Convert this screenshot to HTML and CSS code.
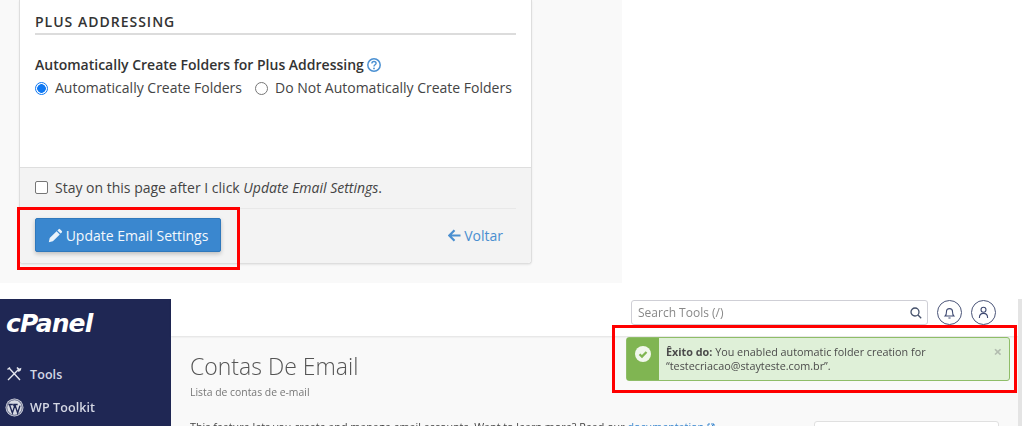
FILE: index.html
```html
<!DOCTYPE html>
<html lang="en">
<head>
<meta charset="utf-8">
<title>Email Settings</title>
<link rel="stylesheet" href="styles.css">
</head>
<body>
<section class="shot-top">
  <div class="card">
    <div class="card-body">
      <h2 class="section-title">PLUS ADDRESSING</h2>
      <div class="field-label">Automatically Create Folders for Plus Addressing
        <svg class="help" width="14" height="14" viewBox="0 0 14 14"><circle cx="7" cy="7" r="6.200" fill="none" stroke="#4a90d2" stroke-width="1.500"/><path d="M4.900 5.500C4.900 4.200 5.900 3.500 7 3.500s2.100 .7 2.100 1.800c0 1.500-2.100 1.400-2.100 3.100" fill="none" stroke="#4a90d2" stroke-width="1.400"/><circle cx="7" cy="10.400" r=".9" fill="#4a90d2"/></svg>
      </div>
      <div class="radios">
        <label class="opt"><span class="radio on"></span>Automatically Create Folders</label>
        <label class="opt"><span class="radio"></span>Do Not Automatically Create Folders</label>
      </div>
    </div>
    <div class="card-foot">
      <div class="stay"><span class="check"></span><span>Stay on this page after I click <em>Update Email Settings</em>.</span></div>
      <div class="actions">
        <button class="btn">
          <svg width="15" height="15" viewBox="0 0 15 15"><path d="M10.600 1.200a1 1 0 0 1 1.400 0l1.800 1.800a1 1 0 0 1 0 1.400l-1.200 1.200-3.200-3.200zM8.600 3.200l3.200 3.200-6.900 6.900L.8 14.200l.9-4.100z" fill="#eaf3fb"/></svg>
          Update Email Settings
        </button>
        <a class="back" href="#">
          <svg width="13" height="13" viewBox="0 0 13 13"><path d="M6.500 1.300 1.300 6.500l5.200 5.200M1.600 6.500H12.500" fill="none" stroke="#4a8fd0" stroke-width="2.200"/></svg>
          Voltar
        </a>
      </div>
    </div>
  </div>
  <div class="mark mark-btn"></div>
</section>

<section class="shot-bottom">
  <aside class="sidebar">
    <div class="logo">cPanel</div>
    <div class="nav-item">
      <svg width="16" height="16" viewBox="0 0 16 16"><path d="M2 14 13 3M3 2l11 12M1.500 3.500 4 1.500M11 1.500c1 1.500 2.500 2 3.500 1.500-.2 1.500-1.200 2-2.500 2" fill="none" stroke="#e4e6ee" stroke-width="1.400"/></svg>
      Tools
    </div>
    <div class="nav-item nav-wp">
      <svg width="19" height="19" viewBox="0 0 18 18"><circle cx="9" cy="9" r="8.500" fill="#d9dbe4"/><circle cx="9" cy="9" r="7.300" fill="none" stroke="#1f2754" stroke-width=".6"/><path d="M3.200 6.200h4.200M4.200 6.200l2.800 8 2-6-1-2M7.800 6.200h4.200M9.300 6.200l2.700 8 2.200-7" fill="none" stroke="#1f2754" stroke-width="1.300"/></svg>
      WP Toolkit
    </div>
  </aside>
  <div class="main">
    <header class="topbar">
      <div class="search"><span>Search Tools (/)</span>
        <svg width="12" height="12" viewBox="0 0 12 12"><circle cx="5" cy="5" r="4" fill="none" stroke="#44506a" stroke-width="1.300"/><path d="m8 8 3.200 3.200" stroke="#44506a" stroke-width="1.300"/></svg>
      </div>
      <span class="round">
        <svg width="13" height="13" viewBox="0 0 12 12"><path d="M2 9.200c1-1 1.200-2 1.200-4a2.800 2.800 0 0 1 5.600 0c0 2 .2 3 1.200 4zM5 11h2" fill="none" stroke="#3f4a72" stroke-width="1"/></svg>
      </span>
      <span class="round">
        <svg width="13" height="13" viewBox="0 0 12 12"><circle cx="6" cy="3.500" r="2.300" fill="none" stroke="#3f4a72" stroke-width="1"/><path d="M2.200 11c0-3 1.500-4.200 3.800-4.200S9.800 8 9.800 11" fill="none" stroke="#3f4a72" stroke-width="1"/></svg>
      </span>
    </header>
    <div class="content">
      <h1 class="page-title">Contas De Email</h1>
      <p class="page-sub">Lista de contas de e-mail</p>
      <div class="intro">
        <p>This feature lets you create and manage email accounts. Want to learn more? Read our <a href="#">documentation</a> <svg width="8" height="8" viewBox="0 0 8 8"><path d="M3 1H1v6h6V5M4 1h3v3M7 1 3.500 4.500" fill="none" stroke="#3a87cf"/></svg>.</p>
        <div class="side-box"></div>
      </div>
    </div>
  </div>
  <div class="alert">
    <div class="alert-icon">
      <svg width="16" height="16" viewBox="0 0 16 16"><circle cx="8" cy="8" r="8" fill="#f1f7ec"/><path d="M4.500 8.200 7 10.600l4.500-4.600" fill="none" stroke="#80b552" stroke-width="2.200"/></svg>
    </div>
    <div class="alert-text"><b>Êxito do:</b> You enabled automatic folder creation for “testecriacao@stayteste.com.br”.</div>
    <span class="alert-x">×</span>
  </div>
  <div class="scroll"></div>
  <div class="mark mark-alert"></div>
</section>
</body>
</html>
```
FILE: styles.css
```css
* { box-sizing: border-box; }
html, body { margin: 0; padding: 0; background: #fff; }
body { width: 1026px; height: 430px; overflow: hidden; position: relative; font-family: "Open Sans", sans-serif; font-size: 14px; color: #333; }

.shot-top { position: relative; width: 622px; height: 283px; background: #f9f9f9; padding-left: 19px; }
.card { width: 513px; height: 264px; background: #fff; border: 1px solid #dedede; border-top: 0; border-radius: 0 0 4px 4px; box-shadow: 0 1px 2px rgba(0,0,0,.08); display: flex; flex-direction: column; }
.card-body { height: 167px; padding: 12px 15px 0; flex: none; }
.section-title { margin: 0; height: 23px; border-bottom: 2px solid #dcdcdc; font-size: 14px; line-height: 20px; font-weight: 600; letter-spacing: 1px; color: #333; }
.field-label { margin-top: 20px; height: 20px; line-height: 20px; font-weight: 600; display: flex; align-items: center; gap: 3px; }
.radios { margin-top: 3px; display: flex; gap: 13px; }
.opt { display: flex; align-items: center; height: 20px; line-height: 20px; color: #444; }
.radio { width: 13px; height: 13px; border-radius: 50%; border: 1px solid #777; margin-right: 7px; background: #fff; }
.radio.on { border: 1.500px solid #0f78f2; background: radial-gradient(circle, #0f78f2 0 4px, #fff 4.600px); }

.card-foot { flex: 1; background: #f3f3f3; border-top: 1px solid #dedede; padding: 0 15px; border-radius: 0 0 4px 4px; }
.stay { height: 41px; border-bottom: 1px solid #e8e8e8; display: flex; align-items: center; color: #444; padding-bottom: 1px; }
.check { width: 13px; height: 13px; border: 1px solid #767676; border-radius: 2px; background: #fff; margin-right: 7px; }
.actions { display: flex; justify-content: space-between; align-items: center; padding-top: 9px; }
.btn { width: 186px; height: 34px; background: #3a87cf; color: #f4f8fc; border: 1px solid #2f78bc; border-radius: 2px; box-shadow: 0 2px 4px rgba(0,0,0,.22); font: 14px "Open Sans", sans-serif; display: flex; align-items: center; justify-content: center; gap: 3px; padding: 0; }
.back { color: #4a8fd0; text-decoration: none; display: flex; align-items: center; gap: 3px; margin-right: 13px; }

.mark { position: absolute; border: 3px solid #f00; pointer-events: none; }
.mark-btn { left: 17px; top: 207px; width: 223px; height: 63px; }
.mark-alert { left: 612px; top: 26px; width: 405px; height: 68px; }

.shot-bottom { position: absolute; left: 0; top: 299px; width: 1026px; height: 127px; display: flex; overflow: hidden; filter: blur(.4px); }
.sidebar { width: 171px; flex: none; background: #1f2754; color: #d4d7e4; }
.logo { margin: 11px 0 0 6px; height: 28px; color: #fff; font: italic 700 25px/28px "DejaVu Sans", sans-serif; letter-spacing: -.9px; }
.nav-item { display: flex; align-items: center; gap: 8px; height: 20px; margin: 0 0 13px 6px; font-size: 12.500px; font-weight: 600; letter-spacing: .1px; }
.logo + .nav-item { margin-top: 26px; }
.nav-wp { gap: 6px; margin-left: 5px; }
.main { width: 847px; flex: none; }
.topbar { height: 37px; background: #fff; display: flex; justify-content: flex-start; padding: 1px 0 0 460px; box-shadow: 0 1px 2px rgba(0,0,0,.1); position: relative; }
.search { width: 297px; height: 25px; border: 1px solid #cfcfd6; border-radius: 3px; display: flex; align-items: center; justify-content: space-between; padding: 0 5px 0 6px; font-size: 12px; color: #888; margin-right: 9px; }
.round { width: 25px; height: 25px; border: 1px solid #4a5478; border-radius: 50%; display: flex; align-items: center; justify-content: center; margin-right: 9px; }
.content { height: 90px; background: #f9f9f9; padding: 14px 0 0 19px; overflow: hidden; }
.page-title { margin: 0; font-size: 23px; font-weight: 300; line-height: 32px; color: #555; }
.page-sub { margin: 3px 0 0; font-size: 10.400px; line-height: 14px; color: #777; }
.intro { position: relative; margin-top: 21px; font-size: 10.750px; line-height: 14px; color: #444; display: flex; }
.intro p { margin: 0; }
.intro a { color: #3a87cf; text-decoration: none; }
.side-box { position: absolute; left: 624px; top: 1px; width: 185px; height: 30px; background: #fff; border: 1px solid #e0e0e0; border-radius: 3px; }

.alert { position: absolute; left: 626px; top: 38px; width: 384px; height: 44px; display: flex; border: 1px solid #8fbd68; border-radius: 3px; background: #dff0d8; font-size: 10.800px; line-height: 14px; color: #4b4b4b; }
.alert-icon { width: 32px; flex: none; background: #80b552; display: flex; justify-content: center; padding-top: 8px; }
.alert-text { padding: 7px 0 0 7px; width: 320px; }
.alert-x { position: absolute; right: 7px; top: 5px; font-size: 15px; font-weight: 700; color: #b3bdb0; line-height: 16px; }
.scroll { position: absolute; left: 1018px; top: 0; width: 4px; height: 127px; background: #e4e4e4; }
```
